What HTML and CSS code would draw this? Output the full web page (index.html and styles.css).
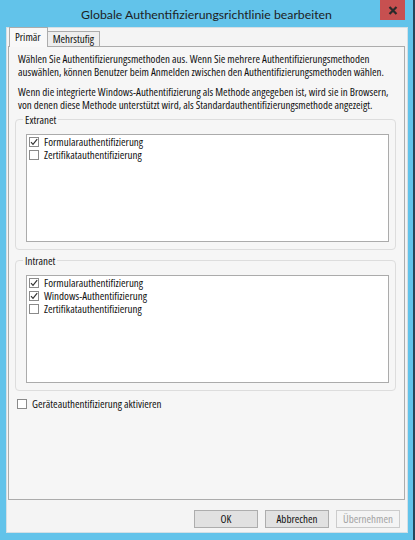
FILE: index.html
```html
<!DOCTYPE html>
<html lang="de">
<head>
<meta charset="utf-8">
<title>Globale Authentifizierungsrichtlinie bearbeiten</title>
<link rel="stylesheet" href="styles.css">
</head>
<body>
<div class="window">
  <div class="titlebar">
    <div class="title">Globale Authentifizierungsrichtlinie bearbeiten</div>
    <div class="close">
      <svg width="10" height="9" viewBox="0 0 10 9"><path d="M1.5 1 L8.5 8 M8.5 1 L1.5 8" stroke="#2a2a2a" stroke-width="2.2" fill="none"/></svg>
    </div>
  </div>
  <div class="client">
    <div class="tabs">
      <div class="tab active">Primär</div>
      <div class="tab">Mehrstufig</div>
    </div>
    <div class="panel">
      <p class="para">Wählen Sie Authentifizierungsmethoden aus. Wenn Sie mehrere Authentifizierungsmethoden<br>auswählen, können Benutzer beim Anmelden zwischen den Authentifizierungsmethoden wählen.</p>
      <p class="para second">Wenn die integrierte Windows-Authentifizierung als Methode angegeben ist, wird sie in Browsern,<br>von denen diese Methode unterstützt wird, als Standardauthentifizierungsmethode angezeigt.</p>
      <fieldset class="group">
        <legend>Extranet</legend>
        <div class="list">
          <div class="item"><span class="cb checked"><svg viewBox="0 0 10 10"><path d="M2 5.2 L4 7.4 L8.2 2.2" stroke="#333" stroke-width="1.2" fill="none"/></svg></span>Formularauthentifizierung</div>
          <div class="item"><span class="cb"></span>Zertifikatauthentifizierung</div>
        </div>
      </fieldset>
      <fieldset class="group">
        <legend>Intranet</legend>
        <div class="list">
          <div class="item"><span class="cb checked"><svg viewBox="0 0 10 10"><path d="M2 5.2 L4 7.4 L8.2 2.2" stroke="#333" stroke-width="1.2" fill="none"/></svg></span>Formularauthentifizierung</div>
          <div class="item"><span class="cb checked"><svg viewBox="0 0 10 10"><path d="M2 5.2 L4 7.4 L8.2 2.2" stroke="#333" stroke-width="1.2" fill="none"/></svg></span>Windows-Authentifizierung</div>
          <div class="item"><span class="cb"></span>Zertifikatauthentifizierung</div>
        </div>
      </fieldset>
      <label class="device"><span class="cb"></span>Geräteauthentifizierung aktivieren</label>
    </div>
    <div class="buttons">
      <div class="btn">OK</div>
      <div class="btn">Abbrechen</div>
      <div class="btn disabled">Übernehmen</div>
    </div>
  </div>
</div>
</body>
</html>
```
FILE: styles.css
```css
html, body {
  margin: 0;
  padding: 0;
}
body {
  width: 415px;
  height: 540px;
  background: #24465a;
  font-family: "Open Sans", "Lato", sans-serif;
  font-stretch: 87.5%;
  font-size: 11px;
  color: #111;
  overflow: hidden;
}
.window {
  width: 413px;
  height: 540px;
  background: #62c3ea;
  display: flex;
  flex-direction: column;
}
.titlebar {
  height: 27px;
  flex: none;
  display: grid;
  grid-template-columns: 1fr auto 1fr;
}
.title {
  grid-column: 2;
  font-family: "Lato", sans-serif;
  font-stretch: normal;
  font-size: 12.3px;
  color: #1e1e1e;
  line-height: 29px;
  white-space: nowrap;
}
.close {
  grid-column: 3;
  justify-self: end;
  align-self: start;
  width: 25px;
  height: 20px;
  margin-right: 8px;
  background: #c75050;
  display: flex;
  align-items: center;
  justify-content: center;
}
.close svg { display: block; }
.client {
  flex: 1;
  margin: 0 5px 7px 6px;
  border: 1px solid #d3dfe5;
  background: #f4f4f4;
  display: flex;
  flex-direction: column;
  padding: 0 2px 0 1px;
}
.tabs {
  display: flex;
  height: 18px;
  padding-left: 1px;
  align-items: flex-end;
}
.tab {
  border: 1px solid #acacac;
  border-bottom: none;
  height: 14px;
  line-height: 14px;
  padding: 0 5px;
  background: #eeeeee;
  margin-left: -1px;
  white-space: nowrap;
}
.tab.active {
  height: 19px;
  line-height: 18px;
  margin-bottom: -1px;
  margin-left: 0;
  padding: 0 6px 0 5px;
  background: #f8f8f8;
  position: relative;
  z-index: 1;
}
.panel {
  flex: 1;
  border: 1px solid #acacac;
  background: #f6f6f6;
  padding: 5px 8px 0 6px;
  display: flex;
  flex-direction: column;
}
.para {
  margin: 0 0 0 3px;
  line-height: 13px;
  white-space: nowrap;
}
.para.second {
  margin-top: 7px;
}
.group {
  margin: 2px 0 0 0;
  border: 1px solid #dddddd;
  border-radius: 4px;
  padding: 0 6px 7px 10px;
}
.group + .group {
  margin-top: 4px;
}
.group legend {
  padding: 0 2px;
  margin-left: -3px;
  line-height: 13px;
}
.list {
  margin-top: 8px;
  height: 106px;
  border: 1px solid #ababab;
  background: #ffffff;
  padding: 0 1px;
}
.item {
  display: flex;
  align-items: center;
  height: 13px;
  line-height: 13px;
  white-space: nowrap;
}
.cb {
  flex: none;
  width: 10px;
  height: 10px;
  box-sizing: border-box;
  border: 1px solid #8a8a8a;
  background: #ffffff;
  margin: 0 5px 0 1px;
  display: flex;
}
.cb svg {
  width: 10px;
  height: 10px;
  margin: -1px;
  display: block;
}
.device {
  display: flex;
  align-items: center;
  height: 13px;
  line-height: 13px;
  margin-top: 6px;
  margin-left: 1px;
}
.buttons {
  flex: none;
  display: flex;
  justify-content: flex-end;
  gap: 7px;
  margin: 10px 0 4px;
  padding-right: 5px;
}
.btn {
  width: 64px;
  height: 18px;
  box-sizing: border-box;
  border: 1px solid #adadad;
  background: #e1e1e1;
  text-align: center;
  line-height: 16px;
}
.btn.disabled {
  border-color: #cccccc;
  background: #f4f4f4;
  color: #a3a3a3;
}
```
